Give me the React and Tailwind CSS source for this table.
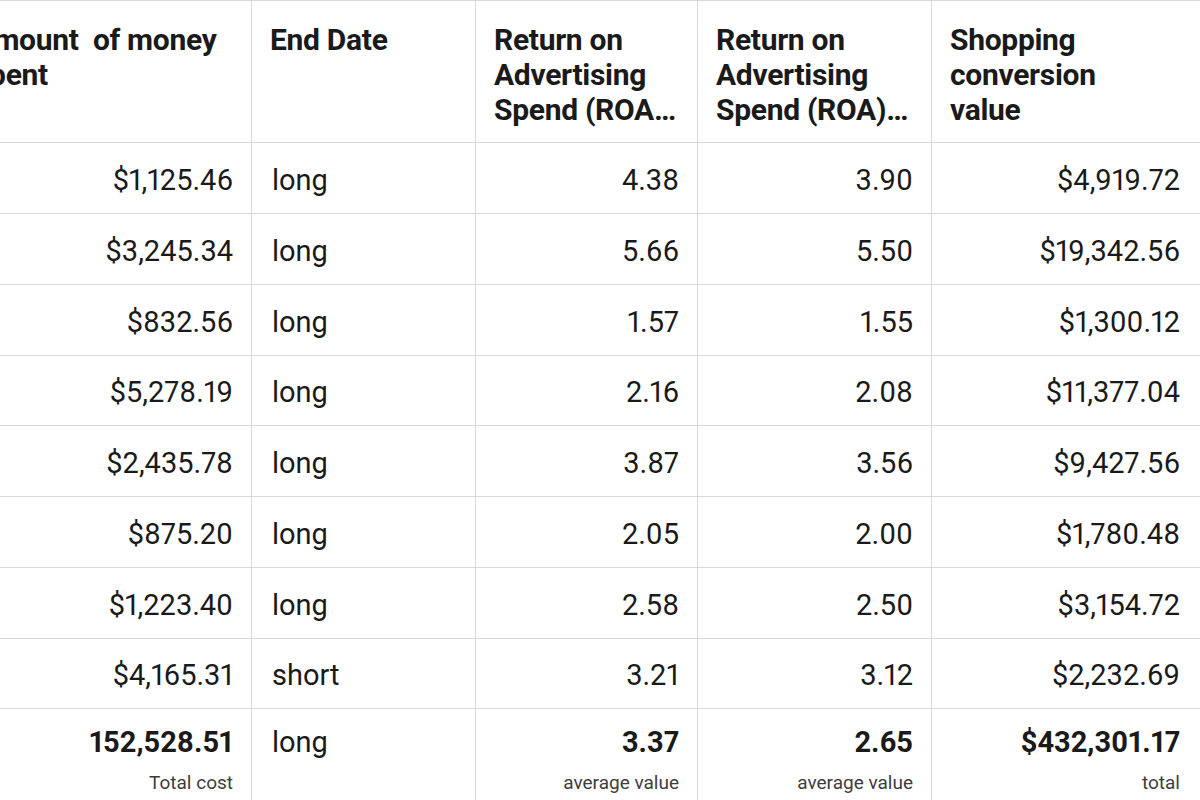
import React from 'react';

const rows = [
  ['$1,125.46', 'long', '4.38', '3.90', '$4,919.72'],
  ['$3,245.34', 'long', '5.66', '5.50', '$19,342.56'],
  ['$832.56', 'long', '1.57', '1.55', '$1,300.12'],
  ['$5,278.19', 'long', '2.16', '2.08', '$11,377.04'],
  ['$2,435.78', 'long', '3.87', '3.56', '$9,427.56'],
  ['$875.20', 'long', '2.05', '2.00', '$1,780.48'],
  ['$1,223.40', 'long', '2.58', '2.50', '$3,154.72'],
  ['$4,165.31', 'short', '3.21', '3.12', '$2,232.69'],
];

// row heights so the grid lines land where the screenshot has them
const rowH = ['h-[71px]', 'h-[71px]', 'h-[71px]', 'h-[70px]', 'h-[71px]', 'h-[71px]', 'h-[71px]', 'h-[70px]'];

const headers = [
  'Amount\u00a0 of money spent',
  'End Date',
  'Return on Advertising Spend (ROA…',
  'Return on Advertising Spend (ROA)…',
  'Shopping conversion value',
];

const totals = [
  ['152,528.51', 'Total cost'],
  ['long', null],
  ['3.37', 'average value'],
  ['2.65', 'average value'],
  ['$432,301.17', 'total'],
];

const App = () => {
  return (
    <div
      className="w-[1200px] h-[800px] overflow-hidden bg-white text-[#1a1a1a]"
      style={{ fontFamily: 'Roboto, "Liberation Sans", sans-serif' }}
    >
      <div className="ml-[-47px] w-[1270px] border-t border-[#d9d9d9] grid grid-cols-[299px_224px_222px_234px_291px]">
        {/* Header */}
        {headers.map((h, i) => (
          <div
            key={h}
            className={`h-[142px] border-b border-[#d9d9d9] px-[18px] pt-[21px] text-[30px] leading-[35px] font-bold tracking-[-0.3px] ${i < 4 ? 'border-r' : ''} ${i === 0 ? 'pl-[21px] pr-[20px]' : ''} ${i === 4 ? 'pr-[80px]' : ''}`}
          >
            {h}
          </div>
        ))}

        {/* Rows */}
        {rows.map((r, ri) =>
          r.map((c, ci) => (
            <div
              key={ri + '-' + ci}
              className={`${rowH[ri]} border-b border-[#d9d9d9] px-[18px] pt-[5px] flex items-center text-[29px] proportional-nums ${ci < 4 ? 'border-r' : ''} ${ci === 1 ? 'justify-start pl-5' : 'justify-end'} ${ci === 4 ? 'pr-[43px]' : ''}`}
            >
              {c}
            </div>
          ))
        )}

        {/* Totals */}
        {totals.map(([v, label], i) => (
          <div
            key={'t' + i}
            className={`h-[100px] px-[18px] pt-[14px] flex flex-col ${i < 4 ? 'border-r border-[#d9d9d9]' : ''} ${i === 1 ? 'items-start pl-5' : 'items-end'} ${i === 4 ? 'pr-[43px]' : ''}`}
          >
            <div className={`text-[29px] leading-[38px] proportional-nums ${i === 1 ? '' : 'font-bold'}`}>{v}</div>
            {label && <div className="text-[19px] leading-[24px] text-[#3d3d3d] mt-[10px]">{label}</div>}
          </div>
        ))}
      </div>
    </div>
  );
};

export default App;
